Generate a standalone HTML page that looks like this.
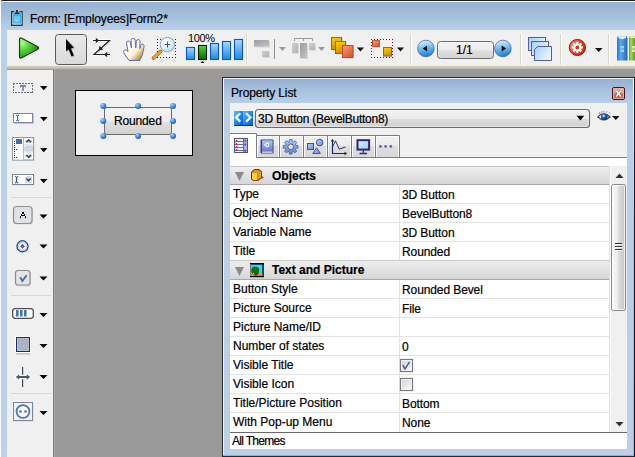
<!DOCTYPE html>
<html><head><meta charset="utf-8">
<style>
*{margin:0;padding:0;box-sizing:border-box}
html,body{width:635px;height:457px;overflow:hidden;background:#fff;font-family:"Liberation Sans",sans-serif;font-size:12px;color:#000;-webkit-text-stroke:0.2px #000}
.a{position:absolute}
svg{position:absolute;overflow:visible}
#win{left:0;top:0;width:640px;height:470px;border-top:1px solid #1c1c1c;border-left:1px solid #fafbfc;border-top-left-radius:3px;background:linear-gradient(#96b2d1,#a4bedb 14px,#b9d0e9 29px,#bcd2ea 100%);box-shadow:inset 0 1px 0 #ffffff;overflow:hidden}
#title{left:30px;top:13px;font-size:12px;line-height:12px;color:#000;white-space:nowrap;letter-spacing:-0.1px}
#tb{left:7px;top:30px;width:640px;height:36px;background:#f0f0f0}
#tbsep{left:7px;top:66px;width:640px;height:4px;background:linear-gradient(#d2cebe,#c8c4b4 50%,#b4b0a0 75%,#8c8a7c)}
#pal{left:7px;top:70px;width:46px;height:400px;background:#f0f0f0}
#palsep{left:53px;top:70px;width:2px;height:400px;background:linear-gradient(90deg,#7c7c7c 50%,#a8a8a8 50%);z-index:1}
#canvas{left:54px;top:70px;width:600px;height:400px;background:#999999}
#form{left:75px;top:90px;width:118px;height:66px;border:1px solid #000;background:#f0f0f0}
.vsep{width:1px;height:30px;top:34px;background:#d6d2c4;box-shadow:1px 0 0 #fff}
.dd{width:0;height:0;border-left:4px solid transparent;border-right:4px solid transparent;border-top:4px solid #000}
.pdd{width:0;height:0;border-left:4px solid transparent;border-right:4px solid transparent;border-top:4px solid #000}
.hsep{left:11px;width:40px;height:1px;background:#ddd8c6}
#pl{left:222px;top:77px;width:420px;height:380px;border:1px solid #2b2b2b;background:linear-gradient(#94b0d0,#a9c2de 13px,#b9cfe8 25px,#bad0e8);box-shadow:inset 1px 1px 0 #e8f0fa}
#plc{left:230px;top:103px;width:397px;height:346px;background:#f0f0f0}
</style></head><body>
<div id="win" class="a"></div>
<!-- title icon -->
<svg style="left:0;top:0" width="30" height="30">
 <path d="M14.3 11.7 H11.7 V25.3 H22 V11.7 H19.5" fill="none" stroke="#333" stroke-width="1.4"/>
 <rect x="12.5" y="12.5" width="9" height="12" fill="#b8e4fa"/>
 <rect x="13" y="13" width="8" height="10.5" fill="#3cb2ea"/>
 <rect x="14" y="16" width="6" height="6.5" fill="#66c6f3"/>
 <rect x="16" y="10" width="2" height="2.5" fill="#333"/>
 <rect x="14.8" y="12.3" width="4.6" height="1.7" fill="#333"/>
 <path d="M15 19.5 L17 21.2 L19.7 17.6" stroke="#c8ecfc" stroke-width="1" stroke-dasharray="1 0.6" fill="none"/>
</svg>
<div id="title" class="a">Form: [Employees]Form2*</div>
<div id="tb" class="a"></div>
<div id="tbsep" class="a"></div>
<!-- play -->
<svg style="left:0;top:0" width="635" height="70">
 <defs>
  <radialGradient id="gplay" cx="0.15" cy="0.25" r="1.0"><stop offset="0" stop-color="#a8ff88"/><stop offset="0.35" stop-color="#5ad43a"/><stop offset="0.75" stop-color="#2a9a1a"/><stop offset="1" stop-color="#106a08"/></radialGradient>
  <linearGradient id="gsel" x1="0" y1="0" x2="0" y2="1"><stop offset="0" stop-color="#e9e9e9"/><stop offset="1" stop-color="#dadada"/></linearGradient>
  <linearGradient id="gbar" x1="0" y1="0" x2="0" y2="1"><stop offset="0" stop-color="#aad8fd"/><stop offset="1" stop-color="#1a88e2"/></linearGradient>
  <linearGradient id="ggreen" x1="0" y1="0" x2="0" y2="1"><stop offset="0" stop-color="#48e028"/><stop offset="1" stop-color="#006a00"/></linearGradient>
  <radialGradient id="gnav" cx="0.4" cy="0.3" r="0.8"><stop offset="0" stop-color="#d9f0ff"/><stop offset="0.5" stop-color="#5fb0ea"/><stop offset="1" stop-color="#1a62b8"/></radialGradient>
  <radialGradient id="gred" cx="0.4" cy="0.3" r="0.8"><stop offset="0" stop-color="#ff9a8a"/><stop offset="0.5" stop-color="#e2341f"/><stop offset="1" stop-color="#9c1208"/></radialGradient>
  <linearGradient id="gfield" x1="0" y1="0" x2="0" y2="1"><stop offset="0" stop-color="#f4f4f4"/><stop offset="0.5" stop-color="#ececec"/><stop offset="0.55" stop-color="#dedede"/><stop offset="1" stop-color="#d4d4d4"/></linearGradient>
  <linearGradient id="gyel" x1="0" y1="0" x2="1" y2="1"><stop offset="0" stop-color="#ffe14a"/><stop offset="1" stop-color="#e28a00"/></linearGradient>
  <linearGradient id="gsal" x1="0" y1="0" x2="1" y2="1"><stop offset="0" stop-color="#ffb08a"/><stop offset="1" stop-color="#e0502a"/></linearGradient>
  <linearGradient id="gpage" x1="0" y1="0.2" x2="1" y2="0.8"><stop offset="0" stop-color="#a4d4f2"/><stop offset="1" stop-color="#f4faff"/></linearGradient>
  <linearGradient id="ghand" x1="0" y1="0" x2="0" y2="1"><stop offset="0" stop-color="#fffdf0"/><stop offset="0.6" stop-color="#f5e9c6"/><stop offset="1" stop-color="#c9a66a"/></linearGradient>
  <radialGradient id="glens" cx="0.4" cy="0.35" r="0.7"><stop offset="0" stop-color="#ffffff"/><stop offset="1" stop-color="#a9d4f5"/></radialGradient>
 </defs>
 <path d="M19.5 39.5 Q19.5 37 21.8 38.2 L37.8 46.8 Q39.6 48 37.8 49.2 L21.8 57.8 Q19.5 59 19.5 56.5 Z" fill="url(#gplay)" stroke="#183a10" stroke-width="1.1"/>
 <!-- selected pointer -->
 <rect x="55.5" y="34.5" width="31" height="30" rx="3" fill="url(#gsel)" stroke="#5a5a5a"/>
 <path d="M67 40.5 L67 52.5 L69.5 50.2 L72.5 57.5 L74.8 56.5 L71.9 49.4 L75 48.5 Z" fill="#9a9a9a" opacity="0.55"/>
 <path d="M66 39 L66 51.5 L68.5 49.2 L71.5 56.5 L73.8 55.5 L70.9 48.4 L74 47.5 Z" fill="#000"/>
 <!-- Z tab order -->
 <g stroke="#a8a8a8" stroke-width="1.2" fill="none" opacity="0.6">
  <path d="M94 41.5 H110 L95 55.5 H111"/>
 </g>
 <g stroke="#fff" stroke-width="2.8" fill="none" stroke-opacity="0.85" stroke-linejoin="round">
  <path d="M93 40.5 H109.5 L94 54.5 H110"/>
 </g>
 <g stroke="#1e2424" stroke-width="1.2" fill="none">
  <path d="M93 40.5 H109.5 L94 54.5 H110"/>
 </g>
 <g fill="#1e2424">
  <path d="M95.8 37.8 L99.2 40.5 L95.8 43.2 Z"/>
  <path d="M98.6 50.6 L99.6 45.8 L103.2 49.4 Z"/>
  <path d="M107.2 51.8 L103.8 54.5 L107.2 57.2 Z"/>
 </g>
 <!-- hand -->
 <defs><linearGradient id="ghand2" x1="0.2" y1="0.3" x2="0.9" y2="1"><stop offset="0" stop-color="#fffff0"/><stop offset="0.5" stop-color="#f8f2dc"/><stop offset="0.78" stop-color="#d0a858"/><stop offset="1" stop-color="#8c6020"/></linearGradient></defs>
 <path d="M129 60.5 L124.5 54 Q122.5 51 124.5 50 Q126 49.3 128 51.5 L126.5 43 Q126.5 41 128.3 41 Q130 41 130.3 43 L131.5 48 L131 40.5 Q131 38.5 133 38.5 Q135 38.5 135.2 40.5 L135.8 48 L136.3 41.5 Q136.5 39.5 138.3 39.5 Q140.2 39.6 140 41.5 L139.8 48.5 L140.8 45.5 Q141.5 43.8 143 44.2 Q144.5 44.8 144 47 L142.8 53 Q141.8 57.5 139.5 60.5 Z" fill="url(#ghand2)" stroke="#6a6aa8" stroke-width="1"/>
 <!-- zoom -->
 <defs><radialGradient id="glens2" cx="0.35" cy="0.3" r="0.75"><stop offset="0" stop-color="#ffffff"/><stop offset="0.5" stop-color="#e4f6ff"/><stop offset="1" stop-color="#b4dcf4"/></radialGradient></defs>
 <g fill="#1e1e50"><rect x="157" y="39" width="1" height="1"/><rect x="157" y="57" width="1" height="1"/><rect x="160" y="39" width="1" height="1"/><rect x="160" y="57" width="1" height="1"/><rect x="163" y="39" width="1" height="1"/><rect x="163" y="57" width="1" height="1"/><rect x="166" y="39" width="1" height="1"/><rect x="166" y="57" width="1" height="1"/><rect x="169" y="39" width="1" height="1"/><rect x="169" y="57" width="1" height="1"/><rect x="172" y="39" width="1" height="1"/><rect x="172" y="57" width="1" height="1"/><rect x="175" y="39" width="1" height="1"/><rect x="175" y="57" width="1" height="1"/><rect x="157" y="42" width="1" height="1"/><rect x="175" y="42" width="1" height="1"/><rect x="157" y="45" width="1" height="1"/><rect x="175" y="45" width="1" height="1"/><rect x="157" y="48" width="1" height="1"/><rect x="175" y="48" width="1" height="1"/><rect x="157" y="51" width="1" height="1"/><rect x="175" y="51" width="1" height="1"/><rect x="157" y="54" width="1" height="1"/><rect x="175" y="54" width="1" height="1"/></g>
 <path d="M153.5 58 L160.5 51.5" stroke="#8a5010" stroke-width="3.6" stroke-linecap="round"/>
 <path d="M153.5 58 L160.5 51.5" stroke="#f4a038" stroke-width="2.4" stroke-linecap="round"/>
 <circle cx="167.4" cy="44.6" r="7.2" fill="url(#glens2)" stroke="#8898c8" stroke-width="0.9"/>
 <path d="M167.5 41.5 V47.5 M164.8 44.5 H170.2" stroke="#505070" stroke-width="1"/>
 <!-- zoom bars -->
 <g stroke="#0a58c0" stroke-width="1.1">
  <rect x="186.5" y="47.5" width="8" height="12" fill="url(#gbar)"/>
  <rect x="198.5" y="45.5" width="8" height="14" fill="url(#ggreen)" stroke="#111"/>
  <rect x="210.5" y="43.5" width="8" height="16" fill="url(#gbar)"/>
  <rect x="222.5" y="41.5" width="8" height="18" fill="url(#gbar)"/>
  <rect x="234.5" y="39.5" width="8" height="20" fill="url(#gbar)"/>
 </g>
 <path d="M200.5 63 L202.5 61 L204.5 63 Z" fill="#000"/>
 <!-- separators -->
 <g fill="#d8d4c6">
  <rect x="246" y="34" width="1" height="31"/>
  <rect x="410" y="34" width="1" height="31"/>
  <rect x="520" y="34" width="1" height="31"/>
  <rect x="560" y="34" width="1" height="31"/>
  <rect x="608" y="34" width="1" height="31"/>
 </g>
 <g fill="#ffffff">
  <rect x="247" y="34" width="1" height="31"/>
  <rect x="411" y="34" width="1" height="31"/>
  <rect x="521" y="34" width="1" height="31"/>
  <rect x="561" y="34" width="1" height="31"/>
  <rect x="609" y="34" width="1" height="31"/>
 </g>
 <!-- disabled align -->
 <defs><linearGradient id="gdis" x1="0" y1="0" x2="1" y2="1"><stop offset="0" stop-color="#9c9c9c"/><stop offset="1" stop-color="#c4c4c4"/></linearGradient>
 <linearGradient id="gdis2" x1="0" y1="0" x2="1" y2="1"><stop offset="0" stop-color="#cfcfcf"/><stop offset="1" stop-color="#b4b4b4"/></linearGradient></defs>
 <rect x="255" y="41" width="15" height="6.5" fill="#c8c8c8" opacity="0.6"/>
 <rect x="254" y="40" width="15" height="6.5" fill="url(#gdis)"/>
 <rect x="263" y="52" width="7" height="6" fill="#cacaca" opacity="0.6"/>
 <rect x="262" y="51" width="7" height="6" fill="url(#gdis2)"/>
 <rect x="274" y="39" width="1" height="20" fill="#8f8f8f"/>
 <path d="M279 47 L286 47 L282.5 51 Z" fill="#9a9a9a"/>
 <path d="M294.5 41 V38.5 H312.5 V41 M303.5 38.5 V41" stroke="#9a9a9a" fill="none" stroke-width="1"/>
 <rect x="293" y="44" width="6" height="10" fill="#d0d0d0" opacity="0.6"/>
 <rect x="292" y="43" width="6" height="10" fill="url(#gdis2)"/>
 <rect x="301" y="44" width="7" height="15" fill="#c8c8c8" opacity="0.6"/>
 <rect x="300" y="43" width="7" height="15" fill="url(#gdis)"/>
 <rect x="310" y="44" width="6" height="7" fill="#d0d0d0" opacity="0.6"/>
 <rect x="309" y="43" width="6" height="7" fill="url(#gdis2)"/>
 <path d="M318 47 L325 47 L321.5 51 Z" fill="#9a9a9a"/>
 <!-- stack -->
 <rect x="332" y="38" width="11" height="12.5" fill="#a0a0a0" opacity="0.45"/>
 <rect x="331.5" y="37.5" width="10" height="12" fill="url(#ggold)" stroke="#c84848"/>
 <rect x="336" y="42" width="11" height="12.5" fill="#a0a0a0" opacity="0.45"/>
 <rect x="335.5" y="41.5" width="10" height="12" fill="url(#ggold)" stroke="#c84848"/>
 <rect x="343" y="46" width="11" height="12.5" fill="#a0a0a0" opacity="0.45"/>
 <rect x="342.5" y="45.5" width="10.5" height="12" fill="url(#gsal2)" stroke="#c04838"/>
 <path d="M357 47.5 L364 47.5 L360.5 51.5 Z" fill="#000"/>
 <!-- group -->
 <defs><linearGradient id="ggold" x1="0" y1="0" x2="0.3" y2="1"><stop offset="0" stop-color="#ffd400"/><stop offset="1" stop-color="#d09000"/></linearGradient>
 <linearGradient id="gsal2" x1="0" y1="0" x2="0.6" y2="1"><stop offset="0" stop-color="#ffa070"/><stop offset="1" stop-color="#d85a30"/></linearGradient></defs>
 <g fill="#9a0000"><rect x="371" y="39" width="1" height="1"/><rect x="371" y="57" width="1" height="1"/><rect x="374" y="39" width="1" height="1"/><rect x="374" y="57" width="1" height="1"/><rect x="377" y="39" width="1" height="1"/><rect x="377" y="57" width="1" height="1"/><rect x="380" y="39" width="1" height="1"/><rect x="380" y="57" width="1" height="1"/><rect x="383" y="39" width="1" height="1"/><rect x="383" y="57" width="1" height="1"/><rect x="386" y="39" width="1" height="1"/><rect x="386" y="57" width="1" height="1"/><rect x="389" y="39" width="1" height="1"/><rect x="389" y="57" width="1" height="1"/><rect x="392" y="39" width="1" height="1"/><rect x="392" y="57" width="1" height="1"/><rect x="371" y="42" width="1" height="1"/><rect x="392" y="42" width="1" height="1"/><rect x="371" y="45" width="1" height="1"/><rect x="392" y="45" width="1" height="1"/><rect x="371" y="48" width="1" height="1"/><rect x="392" y="48" width="1" height="1"/><rect x="371" y="51" width="1" height="1"/><rect x="392" y="51" width="1" height="1"/><rect x="371" y="54" width="1" height="1"/><rect x="392" y="54" width="1" height="1"/></g>
 <rect x="373" y="41" width="7" height="6" fill="#b0b0b0" opacity="0.5"/>
 <rect x="372.5" y="40.5" width="7" height="6" fill="url(#gsal2)" stroke="#c85040"/>
 <rect x="384" y="48" width="8" height="9" fill="#b0b0b0" opacity="0.5"/>
 <rect x="383.5" y="47.5" width="8" height="8.5" fill="url(#ggold)" stroke="#c04850"/>
 <path d="M397 47.5 L404 47.5 L400.5 51.5 Z" fill="#000"/>
 <!-- nav -->
 <defs><linearGradient id="gnav2" x1="0.3" y1="0" x2="0.5" y2="1"><stop offset="0" stop-color="#e0f6ff"/><stop offset="0.4" stop-color="#7ccaf4"/><stop offset="1" stop-color="#1a78d8"/></linearGradient></defs>
 <circle cx="425.9" cy="48.5" r="8.3" fill="url(#gnav2)" stroke="#4050a0" stroke-width="0.7"/>
 <path d="M422.8 48.6 L427.1 45.6 L427.1 51.6 Z" fill="#000"/>
 <rect x="437.5" y="41.5" width="56" height="17" rx="3" fill="url(#gfield)" stroke="#707070"/>
 <circle cx="502.9" cy="48.5" r="8.3" fill="url(#gnav2)" stroke="#4050a0" stroke-width="0.7"/>
 <path d="M506 48.6 L501.7 45.6 L501.7 51.6 Z" fill="#000"/>
 <!-- pages -->
 <rect x="528.5" y="37.5" width="17" height="13" fill="url(#gpage)" stroke="#5a5aa0"/>
 <rect x="531.5" y="41.5" width="17" height="14" fill="url(#gpage)" stroke="#5a5aa0"/>
 <path d="M537.5 46.5 H551.5 V60.5 H534.5 V49.5 Z" fill="url(#gpage)" stroke="#5a5aa0"/>
 <!-- red gear -->
 <defs><radialGradient id="gred2" cx="0.3" cy="0.4" r="0.8"><stop offset="0" stop-color="#ff9a5a"/><stop offset="0.5" stop-color="#e8502a"/><stop offset="1" stop-color="#b81810"/></radialGradient></defs>
 <circle cx="577.4" cy="47.5" r="8.1" fill="url(#gred2)" stroke="#9a0800" stroke-width="0.9"/>
 <g transform="translate(577.4 47.4)" fill="#fff">
  <circle r="3.9"/>
  <rect x="-1.1" y="-5.6" width="2.2" height="11.2"/>
  <rect x="-1.1" y="-5.6" width="2.2" height="11.2" transform="rotate(45)"/>
  <rect x="-1.1" y="-5.6" width="2.2" height="11.2" transform="rotate(90)"/>
  <rect x="-1.1" y="-5.6" width="2.2" height="11.2" transform="rotate(135)"/>
 </g>
 <circle cx="577.4" cy="47.4" r="1.9" fill="#d83018"/>
 <path d="M595 48 L602.5 48 L598.75 52 Z" fill="#000"/>
 <!-- books -->
 <defs>
  <linearGradient id="gbb" x1="0" y1="0" x2="1" y2="0"><stop offset="0" stop-color="#2a78d0"/><stop offset="0.35" stop-color="#5aa8f0"/><stop offset="1" stop-color="#1a68c8"/></linearGradient>
  <linearGradient id="ggb" x1="0" y1="0" x2="1" y2="0"><stop offset="0" stop-color="#6aa020"/><stop offset="0.35" stop-color="#a8d860"/><stop offset="1" stop-color="#5a9818"/></linearGradient>
 </defs>
 <path d="M617 38.5 Q617 36 619 36 L625.5 36 Q627.5 36 627.5 38.5 L627.5 60.5 L617 60.5 Z" fill="url(#gbb)"/>
 <path d="M618.5 36.3 H626 V38 L622.3 39.2 L618.5 38 Z" fill="#e8f4ff"/>
 <rect x="620.5" y="46" width="3.5" height="2.5" fill="#a8d0f8"/>
 <rect x="620.5" y="49.5" width="3.5" height="2.5" fill="#a8d0f8"/>
 <path d="M629 38.5 Q629 36 631 36 L635 36 L635 60.5 L629 60.5 Z" fill="url(#ggb)"/>
 <path d="M630.5 36.3 H635 V38 L630.5 38 Z" fill="#f0ffe0"/>
 <rect x="632" y="46" width="3" height="2.5" fill="#d0f0a8"/>
 <rect x="632" y="49.5" width="3" height="2.5" fill="#d0f0a8"/>
</svg>
<div class="a" style="left:188px;top:33px;font-size:11px;line-height:11px;letter-spacing:-0.4px;-webkit-text-stroke:0">100%</div>
<div class="a" style="left:456px;top:44px;font-size:12px;line-height:12px">1/1</div>

<div id="pal" class="a"></div>
<div id="palsep" class="a"></div>
<svg style="left:0;top:0" width="60" height="457">
 <defs>
  <linearGradient id="gbtn" x1="0" y1="0" x2="0" y2="1"><stop offset="0" stop-color="#f6f6f6"/><stop offset="1" stop-color="#d9d9d9"/></linearGradient>
  <radialGradient id="grad" cx="0.5" cy="0.5" r="0.5"><stop offset="0" stop-color="#ffffff"/><stop offset="0.7" stop-color="#dde8f0"/><stop offset="1" stop-color="#8aa8c0"/></radialGradient>
 </defs>
 <g fill="#000">
  <path d="M40 86 L47.5 86 L43.75 90.3 Z"/>
  <path d="M40 117 L47.5 117 L43.75 121.2 Z"/>
  <path d="M40 148 L47.5 148 L43.75 152.2 Z"/>
  <path d="M40 179 L47.5 179 L43.75 183.2 Z"/>
  <path d="M39.5 214.5 L47.5 214.5 L43.5 218.5 Z"/>
  <path d="M39.5 244.5 L47.5 244.5 L43.5 248.5 Z"/>
  <path d="M39.5 276.5 L47.5 276.5 L43.5 280.5 Z"/>
  <path d="M39.5 313 L47.5 313 L43.5 317 Z"/>
  <path d="M39.5 344 L47.5 344 L43.5 348 Z"/>
  <path d="M39.5 375 L47.5 375 L43.5 379 Z"/>
  <path d="M39.5 411 L47.5 411 L43.5 415 Z"/>
 </g>
 <g fill="#ddd8c6">
  <rect x="11" y="197" width="40" height="1"/>
  <rect x="11" y="295" width="40" height="1"/>
  <rect x="11" y="393" width="40" height="1"/>
 </g>
 <!-- text T -->
 <g fill="#6a7288"><rect x="13" y="83" width="2" height="1"/><rect x="16" y="83" width="2" height="1"/><rect x="19" y="83" width="2" height="1"/><rect x="22" y="83" width="2" height="1"/><rect x="25" y="83" width="2" height="1"/><rect x="28" y="83" width="2" height="1"/><rect x="31" y="83" width="2" height="1"/><rect x="13" y="84" width="1" height="1"/><rect x="13" y="86" width="1" height="2"/><rect x="13" y="89" width="1" height="2"/><rect x="13" y="92" width="1" height="1"/><rect x="15" y="92" width="2" height="1"/><rect x="18" y="92" width="2" height="1"/><rect x="21" y="92" width="2" height="1"/><rect x="24" y="92" width="2" height="1"/><rect x="27" y="92" width="2" height="1"/><rect x="30" y="92" width="2" height="1"/><rect x="32" y="92" width="1" height="1"/><rect x="32" y="85" width="1" height="2"/><rect x="32" y="88" width="1" height="2"/><rect x="32" y="91" width="1" height="2"/></g>
 <path d="M20 85.2 H25.8 V87.2 H25.2 Q24.8 86.3 24 86.3 H23.6 V90.2 L24.6 90.8 H21.4 L22.4 90.2 V86.3 H22 Q21.2 86.3 20.8 87.2 H20 Z" fill="#4a5a8a"/>
 <!-- input -->
 <rect x="13.5" y="113.5" width="19" height="9" fill="#fff" stroke="#7a8898"/>
 <path d="M14 123.5 H33.5 V113.5" stroke="#c8c8c8" fill="none"/>
 <g fill="#4060a8"><rect x="17" y="115.6" width="1.1" height="5"/><circle cx="16.5" cy="115.4" r="0.7"/><circle cx="18.5" cy="115.4" r="0.7"/><circle cx="16.5" cy="120.6" r="0.7"/><circle cx="18.5" cy="120.6" r="0.7"/></g>
 <!-- list -->
 <rect x="13" y="138" width="21.5" height="23" fill="#b8b8b8" opacity="0.5"/>
 <rect x="12.5" y="137.5" width="21" height="22.5" fill="#f4f6f8" stroke="#8a9aae"/>
 <rect x="13" y="138" width="10" height="21.5" fill="#fff"/>
 <path d="M23.5 138 V160" stroke="#b0bccc"/>
 <rect x="16" y="139" width="6" height="5" fill="#4a6aa0"/>
 <g fill="#2a3a5a"><rect x="14" y="141" width="1" height="1"/><rect x="14" y="143" width="1" height="1"/><rect x="14" y="145" width="1" height="1"/><rect x="14" y="147" width="1" height="1"/><rect x="14" y="149" width="1" height="1"/><rect x="14" y="151" width="1" height="1"/><rect x="14" y="153" width="1" height="1"/><rect x="14" y="155" width="1" height="1"/><rect x="14" y="157" width="1" height="1"/><rect x="16" y="149" width="1" height="1"/><rect x="16" y="157" width="1" height="1"/></g>
 <rect x="24.5" y="138.5" width="8.5" height="5.5" rx="1.5" fill="#fff"/>
 <ellipse cx="28.7" cy="141.3" rx="3.6" ry="1.8" fill="#c8d2e2"/>
 <rect x="24.5" y="146.3" width="8.5" height="4.8" rx="2" fill="#d2dae8" stroke="#b8c4d6" stroke-width="0.6"/>
 <rect x="24.5" y="153.2" width="8.5" height="5.6" rx="1.5" fill="#fff"/>
 <ellipse cx="28.7" cy="156" rx="3.6" ry="1.8" fill="#c8d2e2"/>
 <path d="M26.3 142.3 L28.7 140 L31.1 142.3 M26.3 155 L28.7 157.3 L31.1 155" stroke="#333a48" stroke-width="1.3" fill="none"/>
 <path d="M24 144.8 H33.5 M24 151.8 H33.5" stroke="#d8dde6" stroke-width="0.8"/>
 <!-- combo -->
 <rect x="13" y="175" width="21.5" height="10.5" fill="#b8b8b8" opacity="0.5"/>
 <rect x="12.5" y="174.5" width="21" height="10" fill="#fff" stroke="#7a8898"/>
 <g fill="#3a5080"><rect x="16" y="177" width="1.2" height="5.5"/><circle cx="15.6" cy="176.6" r="0.7"/><circle cx="17.6" cy="176.6" r="0.7"/><circle cx="15.6" cy="182.8" r="0.7"/><circle cx="17.6" cy="182.8" r="0.7"/></g>
 <rect x="25" y="176" width="7" height="7" rx="1.5" fill="#d2dae8"/>
 <path d="M26.4 178.6 L28.5 180.8 L30.6 178.6" stroke="#2a3a60" stroke-width="1.4" fill="none"/>
 <!-- button A -->
 <rect x="14" y="207" width="19" height="17.5" rx="3" fill="#c4c4c4" opacity="0.5"/>
 <rect x="13.5" y="206.5" width="18.5" height="17" rx="3" fill="#dfe2e4" stroke="#909090" stroke-width="1.2"/>
 <g fill="#000"><rect x="22" y="212" width="2" height="2"/><rect x="21" y="214" width="1" height="1.5"/><rect x="24" y="214" width="1" height="1.5"/><rect x="21" y="215" width="4" height="1"/><rect x="20" y="216" width="1" height="2.2"/><rect x="25" y="216" width="1" height="2.2"/></g>
 <!-- radio -->
 <circle cx="22.5" cy="246.3" r="5.5" fill="#fff" stroke="#34506e" stroke-width="1.4"/>
 <circle cx="22.5" cy="246.3" r="4.0" fill="none" stroke="#a8d6ee" stroke-width="1.5"/>
 <path d="M22.5 243.8 L25 246.3 L22.5 248.8 L20 246.3 Z" fill="#7a4aa2"/>
 <!-- checkbox -->
 <rect x="16" y="271" width="15" height="15.5" rx="2.5" fill="#c0c0c0" opacity="0.5"/>
 <rect x="15.5" y="270.5" width="14.5" height="14.5" rx="2.5" fill="#e2e4e6" stroke="#8c8c8c" stroke-width="1.2"/>
 <path d="M20.2 277.3 L22.4 281 L26.6 275.2" stroke="#4670a8" stroke-width="1.9" fill="none"/>
 <!-- progress -->
 <path d="M14.3 308.7 H31.7 L33.3 310.3 V316.7 L31.7 318.3 H14.3 L12.7 316.7 V310.3 Z" fill="#fff" stroke="#505050" stroke-width="1.3"/>
 <rect x="16" y="310" width="2.6" height="6.5" fill="#4a78aa"/>
 <rect x="20" y="310" width="2.6" height="6.5" fill="#4a78aa"/>
 <rect x="24" y="310" width="2.6" height="6.5" fill="#4a78aa"/>
 <!-- rect -->
 <rect x="16" y="353" width="14.5" height="1.6" fill="#b0b0b0" opacity="0.7"/>
 <rect x="15.5" y="336.5" width="15" height="16" fill="none" stroke="#fff" stroke-width="1"/>
 <rect x="16.5" y="337.5" width="13" height="14" fill="#a8b4c6" stroke="#262a68"/>
 <rect x="17.5" y="338.5" width="11" height="12" fill="none" stroke="#b8c4d4" stroke-width="0.8"/>
 <!-- splitter -->
 <rect x="22" y="367" width="1.2" height="20" fill="#404850"/>
 <path d="M15.2 377 L19.2 373.6 L19.2 375.6 H26.8 V373.6 L30.8 377 L26.8 380.4 V378.4 H19.2 V380.4 Z" fill="#fff" stroke="#fff" stroke-width="1.6" stroke-linejoin="round" opacity="0.9"/>
 <path d="M15.8 377 L19.2 374.2 L19.2 376 H26.8 V374.2 L30.2 377 L26.8 379.8 V378 H19.2 V379.8 Z" fill="#4a5a5c"/>
 <!-- plugin -->
 <rect x="14" y="403" width="19.5" height="18.5" fill="#b8b8b8" opacity="0.5"/>
 <rect x="13.5" y="402.5" width="19" height="18" fill="#eef2f6" stroke="#7a8898"/>
 <circle cx="23" cy="411.5" r="6.4" fill="#f6f8fa" stroke="#4a78a8" stroke-width="1.8"/>
 <circle cx="20.5" cy="411.5" r="1.3" fill="#4a78a8"/>
 <circle cx="25.5" cy="411.5" r="1.3" fill="#4a78a8"/>
</svg>

<div id="canvas" class="a"></div>
<div id="form" class="a"></div>
<svg style="left:0;top:0" width="200" height="160">
 <defs><linearGradient id="gfbtn" x1="0" y1="0" x2="0" y2="1"><stop offset="0" stop-color="#f4f4f4"/><stop offset="0.5" stop-color="#ececec"/><stop offset="0.55" stop-color="#dfdfdf"/><stop offset="1" stop-color="#d0d0d0"/></linearGradient>
 <radialGradient id="ghdl" cx="0.35" cy="0.3" r="0.75"><stop offset="0" stop-color="#a8d4ff"/><stop offset="0.6" stop-color="#3a86de"/><stop offset="1" stop-color="#1a5ab0"/></radialGradient></defs>
 <rect x="104.5" y="107.5" width="67" height="27" rx="2.5" fill="url(#gfbtn)" stroke="#6a6a6a"/>
 <g fill="url(#ghdl)">
  <circle cx="103.3" cy="106" r="3"/><circle cx="138.1" cy="106" r="3"/><circle cx="173" cy="106" r="3"/>
  <circle cx="103.3" cy="121" r="3"/><circle cx="173" cy="121" r="3"/>
  <circle cx="103.3" cy="136" r="3"/><circle cx="138.1" cy="136" r="3"/><circle cx="173" cy="136" r="3"/>
 </g>
</svg>
<div class="a" style="left:114px;top:114px;font-size:12px;line-height:14px;letter-spacing:-0.15px">Rounded</div>
<div id="pl" class="a"></div>
<div id="plc" class="a"></div>
<div class="a" style="left:633px;top:78px;width:1px;height:378px;background:linear-gradient(#f4f8fc,#7ad8f4 40%,#52ccf0)"></div>
<div class="a" style="left:634px;top:77px;width:1px;height:380px;background:#1c1c1c"></div>
<div class="a" style="left:223px;top:455px;width:411px;height:1px;background:#52ccf0"></div>
<div class="a" style="left:231px;top:87px;font-size:12px;line-height:12px;letter-spacing:-0.15px">Property List</div>
<!-- close button -->
<svg style="left:0;top:0" width="635" height="457">
 <defs>
  <linearGradient id="gclose" x1="0" y1="0" x2="0" y2="1"><stop offset="0" stop-color="#f4b4a4"/><stop offset="0.5" stop-color="#e07a64"/><stop offset="1" stop-color="#d0583c"/></linearGradient>
  <linearGradient id="gnavb" x1="0" y1="0" x2="0" y2="1"><stop offset="0" stop-color="#5bb4f8"/><stop offset="1" stop-color="#0a6ad8"/></linearGradient>
  <linearGradient id="gcombo" x1="0" y1="0" x2="0" y2="1"><stop offset="0" stop-color="#f2f2f2"/><stop offset="0.5" stop-color="#ebebeb"/><stop offset="0.5" stop-color="#dddddd"/><stop offset="1" stop-color="#cfcfcf"/></linearGradient>
  <linearGradient id="gtab" x1="0" y1="0" x2="0" y2="1"><stop offset="0" stop-color="#f2f2f2"/><stop offset="0.45" stop-color="#ebebeb"/><stop offset="0.5" stop-color="#dedede"/><stop offset="1" stop-color="#d8d8d8"/></linearGradient>
  <linearGradient id="ghdr" x1="0" y1="0" x2="0" y2="1"><stop offset="0" stop-color="#f0f0f0"/><stop offset="1" stop-color="#d6d6d6"/></linearGradient>
  <linearGradient id="gthumb" x1="0" y1="0" x2="1" y2="0"><stop offset="0" stop-color="#f4f4f4"/><stop offset="0.5" stop-color="#e4e4e4"/><stop offset="1" stop-color="#cdcdcd"/></linearGradient>
  <linearGradient id="gbook" x1="0" y1="0" x2="0" y2="1"><stop offset="0" stop-color="#a8b8f0"/><stop offset="1" stop-color="#7080d0"/></linearGradient>
  <linearGradient id="gmon" x1="0" y1="0" x2="1" y2="1"><stop offset="0" stop-color="#e8f8ff"/><stop offset="1" stop-color="#8ac8f0"/></linearGradient>
  <linearGradient id="gcube" x1="0" y1="0" x2="1" y2="1"><stop offset="0" stop-color="#ffe070"/><stop offset="1" stop-color="#d08000"/></linearGradient>
 </defs>
 <rect x="612.5" y="87.5" width="12" height="12" rx="1.5" fill="#d8785e" stroke="#4a1020"/>
 <rect x="613.5" y="88.5" width="10" height="5" fill="#eaa896"/>
 <rect x="613.5" y="93.5" width="10" height="5" fill="#d26a50"/>
 <rect x="613.5" y="88.5" width="10" height="10" rx="0.5" fill="none" stroke="#f4c8bc" stroke-opacity="0.6"/>
 <path d="M616.2 90.8 L621 96.4 M621 90.8 L616.2 96.4" stroke="#5a3038" stroke-width="2.6" stroke-opacity="0.5"/>
 <path d="M616.2 90.8 L621 96.4 M621 90.8 L616.2 96.4" stroke="#fff" stroke-width="1.6"/>
 <!-- nav icon -->
 <defs><linearGradient id="gnavh" x1="0" y1="0" x2="1" y2="1"><stop offset="0" stop-color="#5ec0fa"/><stop offset="0.5" stop-color="#1a88ec"/><stop offset="1" stop-color="#0058d8"/></linearGradient></defs>
 <rect x="234" y="111" width="9" height="15" fill="url(#gnavh)"/>
 <rect x="243" y="111" width="10" height="15" fill="url(#gnavh)"/>
 <rect x="234" y="125" width="19" height="1" fill="#0a2a7a"/>
 <path d="M240.2 113.2 L236 117.4 L240.2 121.6 M246.2 113.2 L250.4 117.4 L246.2 121.6" stroke="#fff" stroke-width="2.2" fill="none"/>
 <!-- combo -->
 <rect x="255.5" y="109.5" width="334" height="18" rx="3" fill="url(#gcombo)" stroke="#6a6a6a" stroke-width="1.2"/>
 <rect x="256.6" y="110.6" width="331.8" height="15.8" rx="2" fill="none" stroke="#fff" stroke-opacity="0.6" stroke-width="0.8"/>
 <path d="M576.6 115.8 L584.2 115.8 L580.4 120.4 Z" fill="#000"/>
 <!-- eye -->
 <defs><radialGradient id="giris" cx="0.4" cy="0.35" r="0.7"><stop offset="0" stop-color="#7ab8f0"/><stop offset="0.5" stop-color="#1a58a8"/><stop offset="1" stop-color="#0a2a60"/></radialGradient></defs>
 <path d="M599 114 L600 112 M601.5 113 L602 111 M604 112.5 L604 110.8 M606.5 112.5 L607 111 M609 113.5 L610 112" stroke="#555" stroke-width="0.8" opacity="0.7"/>
 <path d="M597.8 117 Q603.5 110.5 610 117 Q603.5 122.5 597.8 117 Z" fill="#f4ead8" stroke="#333" stroke-width="1.1"/>
 <path d="M599 118.5 Q603.5 122 609 118.5" stroke="#b08050" stroke-width="0.8" fill="none"/>
 <circle cx="604.3" cy="116.8" r="3.3" fill="url(#giris)"/>
 <circle cx="603.6" cy="115.8" r="0.9" fill="#d0e8ff"/>
 <path d="M612 116 L619.5 116 L615.75 120 Z" fill="#000"/>
 <!-- tabs -->
 <rect x="230" y="157" width="397" height="9" fill="#fff"/>
 <path d="M256.5 157 V135.5 H279.5 V157" fill="url(#gtab)" stroke="#7c7c86"/>
 <path d="M257.5 157 V136.5 H278.5 V157" fill="none" stroke="#fff" stroke-opacity="0.8"/>
 <path d="M279.5 157 V135.5 H303.5 V157" fill="url(#gtab)" stroke="#7c7c86"/>
 <path d="M280.5 157 V136.5 H302.5 V157" fill="none" stroke="#fff" stroke-opacity="0.8"/>
 <path d="M303.5 157 V135.5 H327.5 V157" fill="url(#gtab)" stroke="#7c7c86"/>
 <path d="M304.5 157 V136.5 H326.5 V157" fill="none" stroke="#fff" stroke-opacity="0.8"/>
 <path d="M327.5 157 V135.5 H351.5 V157" fill="url(#gtab)" stroke="#7c7c86"/>
 <path d="M328.5 157 V136.5 H350.5 V157" fill="none" stroke="#fff" stroke-opacity="0.8"/>
 <path d="M351.5 157 V135.5 H375.5 V157" fill="url(#gtab)" stroke="#7c7c86"/>
 <path d="M352.5 157 V136.5 H374.5 V157" fill="none" stroke="#fff" stroke-opacity="0.8"/>
 <path d="M375.5 157 V135.5 H399.5 V157" fill="url(#gtab)" stroke="#7c7c86"/>
 <path d="M376.5 157 V136.5 H398.5 V157" fill="none" stroke="#fff" stroke-opacity="0.8"/>
 <path d="M256 157.5 H627" stroke="#7c7c86"/>
 <rect x="230" y="133" width="26.5" height="25" fill="#fff"/>
 <path d="M230 133.5 H256.5 V158" fill="none" stroke="#7c7c86"/>
 <rect x="230" y="157" width="26" height="2" fill="#fff"/>
 <!-- tab icons -->
 <rect x="234.5" y="138.5" width="13" height="14" fill="#eef0f6" stroke="#50508a"/>
 <rect x="243" y="139" width="4" height="13" fill="#a8b4e4"/>
 <path d="M243.5 139 V152" stroke="#6a6aa0" stroke-width="1"/>
 <g stroke="#6a6aa0" stroke-width="1"><path d="M235 141.5 H243 M235 144.5 H243 M235 147.5 H243 M235 150.5 H243"/></g>
 <g fill="#d81818"><circle cx="236.5" cy="140.8" r="0.9"/><circle cx="236.5" cy="143.8" r="0.9"/><circle cx="236.5" cy="146.8" r="0.9"/><circle cx="236.5" cy="149.8" r="0.9"/></g>
 <path d="M244 141.5 L245.3 139.8 L246.6 141.5 Z M244 150 L245.3 151.7 L246.6 150 Z" fill="#30307a"/>
 <circle cx="245.3" cy="144.5" r="1" fill="#3050b0"/>
 <defs><linearGradient id="gbook2" x1="0" y1="0" x2="0" y2="1"><stop offset="0" stop-color="#a8c8fa"/><stop offset="1" stop-color="#7078d0"/></linearGradient></defs>
 <path d="M260.5 140.5 Q260.5 139.5 261.5 139.5 H272.5 Q273.5 139.5 273.5 140.5 V153.5 H261.5 Q260.5 153.5 260.5 152.5 Z" fill="#3a3a78"/>
 <rect x="262" y="140.3" width="10.6" height="10.8" fill="url(#gbook2)"/>
 <rect x="262" y="151.5" width="10.6" height="1.2" fill="#fff"/>
 <path d="M264 145 H265.5" stroke="#fff" stroke-width="1.1"/>
 <ellipse cx="267.3" cy="145" rx="1.4" ry="1.9" fill="none" stroke="#fff" stroke-width="1.1"/>
 <defs><linearGradient id="gshape" x1="0" y1="0" x2="1" y2="1"><stop offset="0" stop-color="#c0d0fa"/><stop offset="1" stop-color="#7088d8"/></linearGradient></defs>
 <g>
  <defs><linearGradient id="ggear" gradientUnits="userSpaceOnUse" x1="0" y1="139" x2="0" y2="155"><stop offset="0" stop-color="#a4d4fc"/><stop offset="1" stop-color="#6c7ccc"/></linearGradient></defs>
  <path d="M289.34 141.68 L289.30 139.53 L292.10 139.53 L292.06 141.68 L293.36 142.21 L294.85 140.67 L296.83 142.65 L295.29 144.14 L295.82 145.44 L297.97 145.40 L297.97 148.20 L295.82 148.16 L295.29 149.46 L296.83 150.95 L294.85 152.93 L293.36 151.39 L292.06 151.92 L292.10 154.07 L289.30 154.07 L289.34 151.92 L288.04 151.39 L286.55 152.93 L284.57 150.95 L286.11 149.46 L285.58 148.16 L283.43 148.20 L283.43 145.40 L285.58 145.44 L286.11 144.14 L284.57 142.65 L286.55 140.67 L288.04 142.21 Z" fill="url(#ggear)" stroke="#4a58a0" stroke-width="0.8" stroke-linejoin="round"/>
  <circle cx="290.7" cy="146.8" r="2.9" fill="#dedede" stroke="#4a58a0" stroke-width="1"/>
 </g>
 <rect x="307.5" y="143.5" width="6" height="6" fill="url(#gshape)" stroke="#4050a0"/>
 <circle cx="319.7" cy="142.6" r="3.3" fill="url(#gshape)" stroke="#4050a0"/>
 <path d="M312.8 153.5 L316.6 147.8 L320.4 153.5 Z" fill="url(#gshape)" stroke="#4050a0"/>
 <path d="M332.5 140 V153.5 H346" stroke="#1a2060" stroke-width="1.1" fill="none"/>
 <path d="M330.8 141.5 L332.5 138.8 L334.2 141.5 Z M344.5 151.8 L347.2 153.5 L344.5 155.2 Z" fill="#1a2060"/>
 <path d="M333 146 L335.5 140.8 L339.2 149.2 L345.5 147" stroke="#1a2060" stroke-width="0.9" fill="none"/>
 <rect x="357.5" y="140.2" width="11.6" height="9.4" fill="url(#gmon)" stroke="#2a2a70" stroke-width="2"/>
 <path d="M363.3 150.5 V152.5 M359.5 153.5 H367" stroke="#2a2a70" stroke-width="1.4"/>
 <g fill="#5060a8"><circle cx="380.4" cy="146.4" r="1.3"/><circle cx="385.6" cy="146.4" r="1.3"/><circle cx="390.8" cy="146.4" r="1.3"/></g>
 <!-- list -->
 <rect x="230" y="166" width="381" height="266" fill="#fff"/>
 <g>
  <rect x="230" y="166" width="380" height="18" fill="url(#ghdr)"/>
  <rect x="230" y="166" width="380" height="1" fill="#c8c8c8"/>
  <rect x="230" y="184" width="380" height="1" fill="#a8a8a8"/>
  <rect x="230" y="260" width="380" height="19" fill="url(#ghdr)"/>
  <rect x="230" y="260" width="380" height="1" fill="#c8c8c8"/>
  <rect x="230" y="279" width="380" height="1" fill="#a8a8a8"/>
 </g>
 <g fill="#e3e3e3">
  <rect x="230" y="203" width="380" height="1"/>
  <rect x="230" y="222" width="380" height="1"/>
  <rect x="230" y="241" width="380" height="1"/>
  <rect x="230" y="298" width="380" height="1"/>
  <rect x="230" y="317" width="380" height="1"/>
  <rect x="230" y="336" width="380" height="1"/>
  <rect x="230" y="355" width="380" height="1"/>
  <rect x="230" y="374" width="380" height="1"/>
  <rect x="230" y="393" width="380" height="1"/>
  <rect x="230" y="412" width="380" height="1"/>
  <rect x="399" y="185" width="1" height="75"/>
  <rect x="399" y="280" width="1" height="152"/>
  <rect x="609" y="166" width="1" height="266"/>
 </g>
 <!-- header icons -->
 <path d="M235 172 L244 172 L239.5 181 Z" fill="#8a8a8a"/>
 <path d="M235 267 L244 267 L239.5 276 Z" fill="#8a8a8a"/>
 <path d="M262 176 L264 177.5 L262 179 Z" fill="#707070"/>
 <path d="M251 172 L254.5 169 L259 169 L262 171.5 L262 178 L258 181 L253 181 L251 179 Z" fill="#a81810"/>
 <path d="M252 172.5 L254.8 170 L258.8 170 L257.5 173 L252 173 Z" fill="#f59a18"/>
 <path d="M252 173 L257.5 173 L257.5 180.2 L253.3 180.2 L252 178.8 Z" fill="#f8d040"/>
 <path d="M257.5 173 L258.8 170 L261.2 172 L261.2 177.6 L257.5 180.2 Z" fill="#e0a010"/>
 <g fill="#fff8c0"><rect x="253.5" y="175" width="1" height="1"/><rect x="256" y="174" width="1" height="1"/><rect x="255" y="177" width="1" height="1"/></g>
 <rect x="250" y="264" width="14" height="14" fill="#c0c0c0" opacity="0.5"/>
 <rect x="250" y="263" width="13.5" height="14" fill="#30d8f8"/>
 <rect x="250" y="263" width="14" height="1.6" fill="#000"/>
 <rect x="262.4" y="264" width="1.3" height="13" fill="#000"/>
 <rect x="250" y="276" width="13.7" height="1.2" fill="#000"/>
 <rect x="250" y="264" width="0.8" height="12" fill="#8a6a60"/>
 <rect x="251" y="274" width="11.4" height="2" fill="#f08010"/>
 <path d="M251.2 270 Q251.5 267 254 266.8 Q256 266 258 267.5 Q259.8 268.5 259 271 Q259.8 273.5 257 274.5 H253.5 Q251 273.5 251.2 271 Z" fill="#107010"/>
 <rect x="254.5" y="273.5" width="3" height="2" fill="#603010"/>
 <rect x="253" y="273" width="1" height="1" fill="#f0f040"/>
 <rect x="255" y="269" width="1" height="1" fill="#b04020"/>
 <!-- scrollbar -->
 <defs><linearGradient id="gthumb2" x1="0" y1="0" x2="1" y2="0"><stop offset="0" stop-color="#fbfbfb"/><stop offset="0.45" stop-color="#ececec"/><stop offset="0.5" stop-color="#dcdcdc"/><stop offset="1" stop-color="#c4c4c4"/></linearGradient></defs>
 <rect x="610" y="166" width="17" height="266" fill="#f0f0f0"/>
 <rect x="609" y="166" width="1" height="266" fill="#e0e0e0"/>
 <rect x="610" y="166" width="1" height="266" fill="#fafafa"/>
 <path d="M615.5 178 L619.5 173.5 L623.5 178 Z" fill="#333"/>
 <path d="M615.5 422 L619.5 426.5 L623.5 422 Z" fill="#333"/>
 <rect x="611.5" y="184.5" width="14" height="126" rx="2" fill="url(#gthumb2)" stroke="#8a8a8a"/>
 <rect x="612.5" y="185.5" width="12" height="124" rx="1" fill="none" stroke="#fff" stroke-opacity="0.7"/>
 <path d="M615 243.5 H622 M615 246.5 H622 M615 249.5 H622" stroke="#333" stroke-width="1.2"/>
 <path d="M615.5 244.5 H622.5 M615.5 247.5 H622.5 M615.5 250.5 H622.5" stroke="#fff" stroke-width="0.8"/>
 <!-- bottom -->
 <rect x="230" y="432" width="397" height="1" fill="#6a6a6a"/>
 <rect x="230" y="433" width="397" height="16" fill="#fff"/>
 <!-- checkboxes -->
 <defs><linearGradient id="gchk" x1="0" y1="0" x2="1" y2="1"><stop offset="0" stop-color="#d4d8de"/><stop offset="1" stop-color="#f8f8f8"/></linearGradient></defs>
 <rect x="400.5" y="359.5" width="12" height="12" fill="#fff" stroke="#7a7a7a" stroke-width="1.2"/>
 <rect x="402" y="361" width="9" height="9" fill="url(#gchk)"/>
 <path d="M402.8 365 L405 368.8 L409.6 361.8" stroke="#3a58a8" stroke-width="1.5" fill="none"/>
 <rect x="400.5" y="378.5" width="12" height="12" fill="#fff" stroke="#7a7a7a" stroke-width="1.2"/>
 <rect x="402" y="380" width="9" height="9" fill="url(#gchk)"/>
</svg>
<!-- list text -->
<div class="a" id="lt" style="left:233px;top:167px;width:170px;font-size:12px;line-height:19px;letter-spacing:0px">
 <div style="height:18px;line-height:18px;padding-left:39px;font-weight:bold">Objects</div>
 <div>Type</div><div>Object Name</div><div>Variable Name</div><div>Title</div>
 <div style="height:19px;padding-left:39px;font-weight:bold">Text and Picture</div>
 <div>Button Style</div><div>Picture Source</div><div>Picture Name/ID</div><div>Number of states</div><div>Visible Title</div><div>Visible Icon</div><div>Title/Picture Position</div><div>With Pop-up Menu</div>
</div>
<div class="a" style="left:402px;top:186px;width:200px;font-size:12px;line-height:19px;letter-spacing:-0.1px">
 <div>3D Button</div><div>BevelButton8</div><div>3D Button</div><div>Rounded</div>
 <div style="height:19px"></div>
 <div>Rounded Bevel</div><div>File</div><div>&nbsp;</div><div>0</div><div>&nbsp;</div><div>&nbsp;</div><div>Bottom</div><div>None</div>
</div>
<div class="a" style="left:232px;top:434px;font-size:12px;line-height:14px;letter-spacing:-0.7px">All Themes</div>
<div class="a" style="left:258px;top:112px;font-size:12px;line-height:14px;letter-spacing:-0.25px">3D Button (BevelButton8)</div>

</body></html>
